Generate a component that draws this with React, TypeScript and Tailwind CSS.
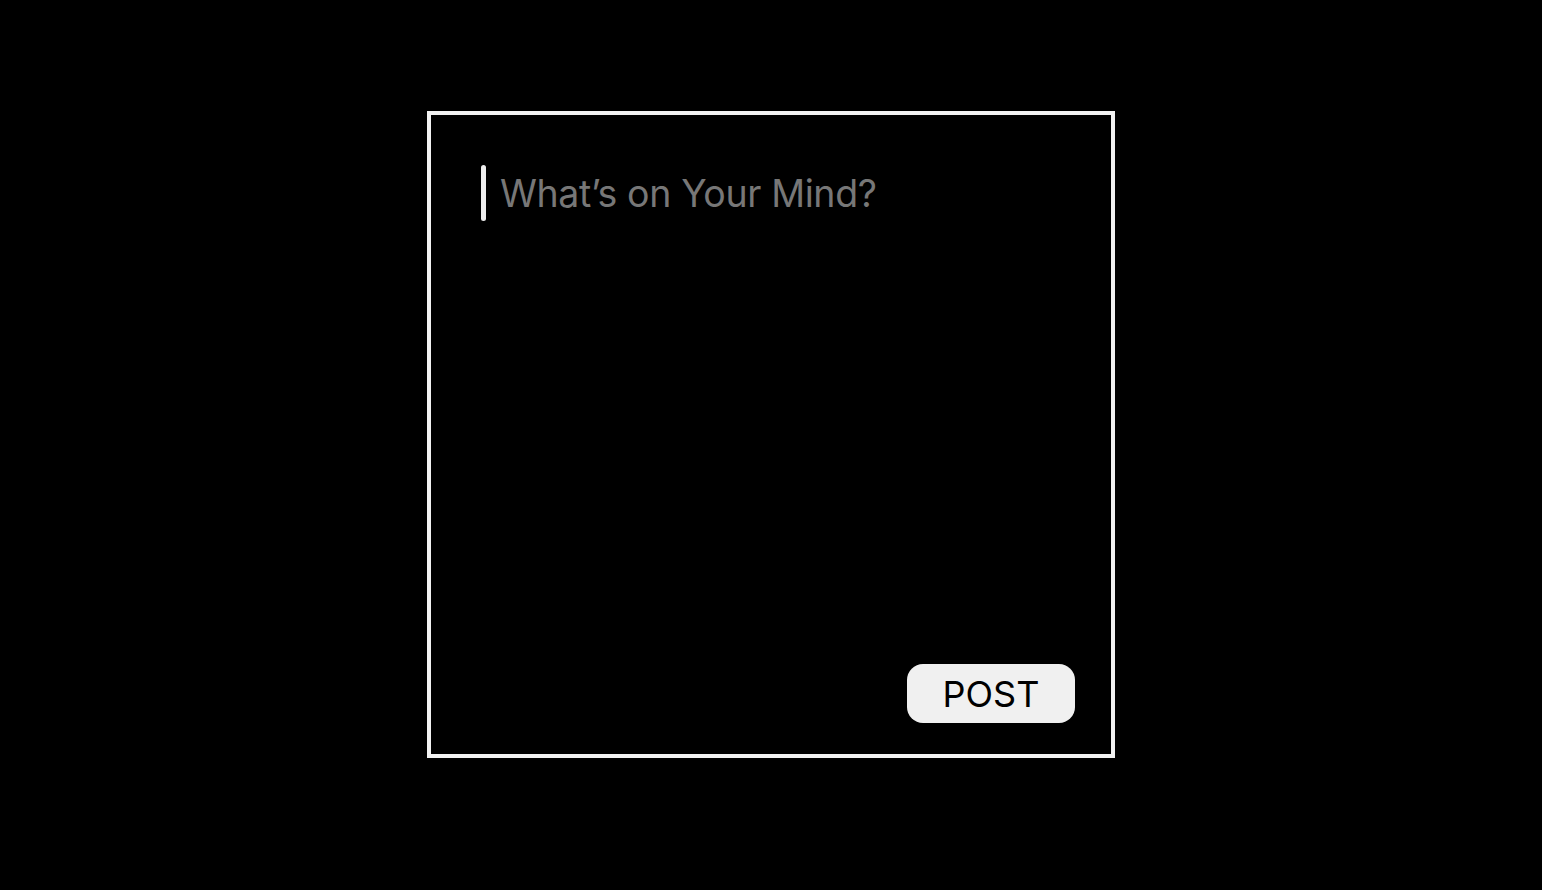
import React from 'react';

export default function App() {
  return (
    <div className="h-[890px] w-full bg-black pt-[111px] flex justify-center">
      <div className="w-[688px] h-[647px] border-4 border-[#f2f2f2] flex flex-col justify-between px-[50px] pt-[50px] pr-[36px] pb-[31px]">
        <div className="flex items-center gap-[14px]">
          <div className="w-[5px] h-[56px] bg-[#eeeeee] rounded-sm" />
          <span className="text-[37.5px] leading-none text-[#777777] font-['Inter',sans-serif] tracking-[-0.01em] pt-[2px]">
            What’s on Your Mind?
          </span>
        </div>
        <div className="flex justify-end">
          <button className="w-[168px] h-[59px] rounded-[16px] bg-[#f0f0f0] text-black text-[36px] font-['Inter',sans-serif] leading-none flex items-center justify-center">
            POST
          </button>
        </div>
      </div>
    </div>
  );
}
